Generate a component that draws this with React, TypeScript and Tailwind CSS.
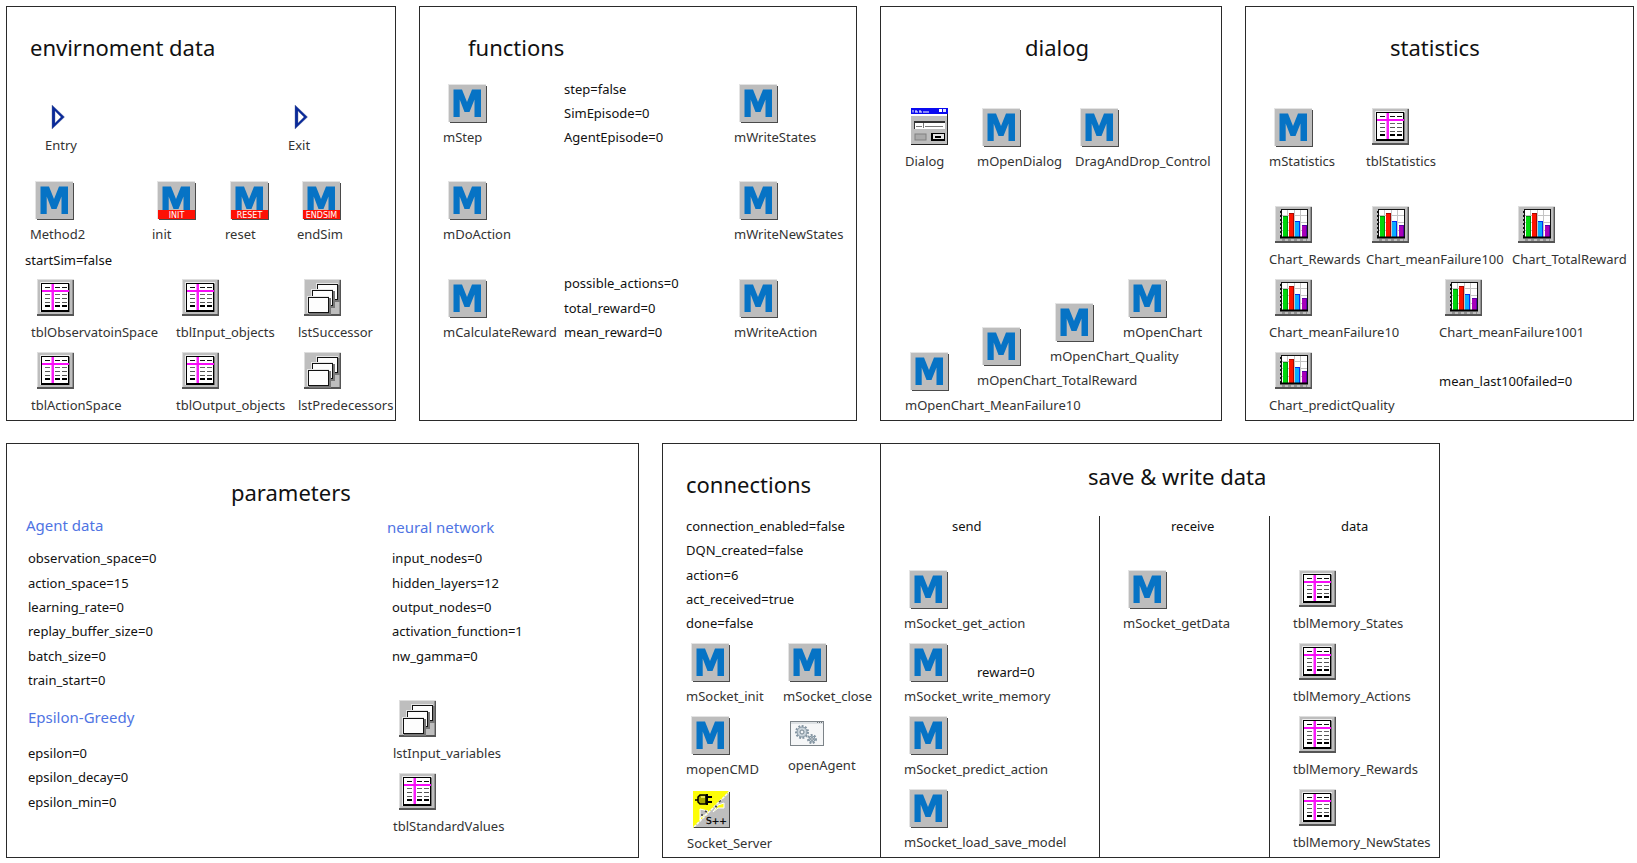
import type { ReactNode } from "react";

type IconKind =
  | "port"
  | "method"
  | "init"
  | "reset"
  | "endsim"
  | "table"
  | "list"
  | "chart"
  | "dialog"
  | "program"
  | "socket";

type NodeItem = { icon: IconKind; label: string; x: number; y: number };
type VarItem = { text: string; x: number; y: number };

function Tile() {
  return (
    <>
      <rect x="0" y="0" width="37" height="37" fill="#bebebe" />
      <path d="M0 37V0H37V1H1V37Z" fill="#dedede" />
      <path d="M0 37V35H35V1H37V37Z" fill="#555" />
      <path d="M35 35V1H36V35Z" fill="#909090" />
    </>
  );
}

function MethodIcon({ tag }: { tag?: string }) {
  return (
    <>
      <rect x="0" y="0" width="38" height="38" fill="#e4e4e4" />
      <rect x="1" y="1" width="37" height="37" fill="#bdbdbd" />
      <path d="M2 39V38H38V2H39V39Z" fill="#4a4a4a" />
      <path d="M5.500 5.500H14L19 18L24 5.500H33V33H26.500V15.500L21.500 28H16.500L11.700 15.500V33H5.500Z" fill="#0673c5" />
      {tag && (
        <>
          <rect x="1" y="29" width="37" height="9" fill="#fd1105" />
          <text
            x="19.5"
            y="36.5"
            textAnchor="middle"
            fontSize="8"
            fontFamily="'DejaVu Sans', sans-serif"
            fill="#fff"
          >
            {tag}
          </text>
        </>
      )}
    </>
  );
}

function TableIcon() {
  const rows = [
    { y: 8, fill: "#111" },
    { y: 15, fill: "#666" },
    { y: 19, fill: "#555" },
    { y: 23, fill: "#555" },
    { y: 26, fill: "#000" },
  ];
  return (
    <g transform="translate(1 0)">
      <Tile />
      <path d="M3.500 33V3.500H33" stroke="#eee" fill="none" />
      <rect x="4" y="4" width="28" height="29" fill="#000" />
      <rect x="32" y="5" width="1" height="28" fill="#777" />
      <rect x="5" y="5" width="26" height="26" fill="#fff" />
      {rows.map((r) => (
        <g key={r.y} fill={r.fill}>
          <rect x="8" y={r.y} width="5" height={r.y === 26 ? 2 : 1} />
          <rect x="18" y={r.y} width="5" height={r.y === 26 ? 2 : 1} />
          <rect x="25" y={r.y} width="5" height={r.y === 26 ? 2 : 1} />
        </g>
      ))}
      <rect x="14.5" y="5" width="2.5" height="26" fill="#f81cf8" />
      <rect x="5" y="11" width="27" height="2" fill="#f80cf8" />
    </g>
  );
}

function ListIcon() {
  const sheet = (x: number, y: number) => (
    <g>
      <rect x={x + 1} y={y + 1} width="22" height="17" fill="#777" />
      <rect x={x - 1} y={y - 1} width="22" height="17" fill="#e6e6e6" />
      <rect x={x} y={y} width="21" height="16" fill="#111" />
      <rect x={x + 1} y={y + 1} width="19" height="14" fill="#fdfdfd" />
    </g>
  );
  return (
    <g transform="translate(1 0)">
      <Tile />
      {sheet(13, 5)}
      {sheet(8, 11)}
      {sheet(4, 18)}
    </g>
  );
}

function ChartIcon() {
  const bars = [
    { x: 8, y: 10, fill: "#00d80c", side: "#009008" },
    { x: 14, y: 7, fill: "#ff1400", side: "#a80800" },
    { x: 20, y: 15, fill: "#08acff", side: "#0030f0" },
    { x: 27, y: 19, fill: "#a800b8", side: "#5800a8" },
  ];
  return (
    <g transform="translate(1 0)">
      <Tile />
      <rect x="5" y="3" width="28" height="29" fill="#111" />
      <rect x="7" y="4" width="25" height="27" fill="#fff" />
      <path d="M7 9.500H32M7 16.500H32M7 24.500H32M12.500 4V31M19.500 4V31M25.500 4V31" stroke="#c4c4c4" />
      <path d="M5 3V32" stroke="#bebebe" strokeWidth="2" strokeDasharray="2 2" />
      {bars.map((b) => (
        <g key={b.x}>
          <rect x={b.x} y={b.y} width="5" height={31 - b.y} fill={b.side} />
          <rect x={b.x} y={b.y + 1} width="4" height={30 - b.y} fill={b.fill} />
        </g>
      ))}
      <path d="M5 31.500H33" stroke="#000" strokeWidth="2" />
      <path d="M7 34H32" stroke="#666" strokeWidth="1" strokeDasharray="3 3" />
    </g>
  );
}

function DialogIcon() {
  return (
    <g transform="translate(1 0)">
      <rect x="0" y="0" width="37" height="37" fill="#bebebe" />
      <path d="M0 37V36H36V6H37V37Z" fill="#222" />
      <rect x="0" y="0" width="37" height="6" fill="#0a0af0" />
      <path d="M2 2V4.500M4 4H7M5 2V4M8 4H11M9 2V4M12 4H18" stroke="#fff" strokeWidth="1" />
      <rect x="28" y="1" width="3" height="3" fill="#fff" />
      <rect x="32" y="1" width="3" height="3" fill="#e0e0ff" />
      <rect x="0" y="6" width="36" height="2" fill="#fff" />
      <rect x="3" y="13" width="31" height="8" fill="#333" />
      <rect x="4" y="15" width="30" height="6" fill="#fff" />
      <path d="M5 18.500H11M14 18.500H32M12.500 15V20" stroke="#777" />
      <rect x="4" y="26" width="11" height="6" fill="#aaa" stroke="#808080" />
      <rect x="20" y="25" width="14" height="8" fill="#000" />
      <rect x="22" y="26" width="11" height="5" fill="#e4e4e4" />
      <path d="M24 29H30" stroke="#000" strokeWidth="2" />
    </g>
  );
}

function Gear({ cx, cy, r }: { cx: number; cy: number; r: number }) {
  return (
    <>
      <circle
        cx={cx}
        cy={cy}
        r={r}
        fill="none"
        stroke="#8495a2"
        strokeWidth="2"
        strokeDasharray="1.900 1.500"
      />
      <circle cx={cx} cy={cy} r={r - 1} fill="#c9d3da" stroke="#8495a2" strokeWidth="1" />
      <circle cx={cx} cy={cy} r={r / 3} fill="#f4f6f8" stroke="#73838f" strokeWidth="1" />
    </>
  );
}

function ProgramIcon() {
  return (
    <>
      <rect x="-2.5" y="9.500" width="33" height="24" fill="#f5f6f7" stroke="#7c8388" />
      <rect x="-2" y="10" width="32" height="2" fill="#dde1e4" />
      <path d="M24 10.500H30" stroke="#6c7378" strokeDasharray="1 1" />
      <Gear cx={9} cy={20} r={6} />
      <Gear cx={19} cy={27} r={4} />
    </>
  );
}

function SocketIcon() {
  return (
    <g transform="translate(1 1)">
      <rect x="0" y="0" width="37" height="37" fill="#bebebe" />
      <path d="M0 0H37L0 37Z" fill="#fdfd08" />
      <path d="M37 0L0 37" stroke="#f8f8f8" strokeWidth="1.500" strokeDasharray="3 1" />
      <path d="M7 18L15 20L12 24L8 26L7 29Z" fill="#bebebe" stroke="#fff" />
      <path d="M31 12V17H25L20 21L25 14Z" fill="#fdfd08" stroke="#fff" />
      <path d="M26 11L28 9.500M22 15L24 16M12 20L14 21M8 24H10" stroke="#444" strokeWidth="1.500" />
      <path d="M1 37V36H36V1H37V37Z" fill="#444" />
      <path d="M2 9H5V6L7 4H13V13H7L5 11V9" fill="#a8a800" stroke="#000" strokeWidth="1.500" />
      <path d="M8 6H12" stroke="#fff870" strokeWidth="1.500" />
      <path d="M13 6H19M13 11H19M14 3V14" stroke="#000" strokeWidth="2" />
      <text x="13" y="33" fontSize="9" fontFamily="'DejaVu Sans', sans-serif" fill="#000" stroke="#000" strokeWidth="0.3">
        S++
      </text>
    </g>
  );
}

function PortIcon() {
  return (
    <path
      d="M2 13L14.500 25L2 37ZM5 19V31L11 25Z"
      fill="#0a2a9a"
      fillRule="evenodd"
      stroke="#5a6a9a"
      strokeWidth="0.4"
    />
  );
}

const icons: Record<IconKind, ReactNode> = {
  port: <PortIcon />,
  method: <MethodIcon />,
  init: <MethodIcon tag="INIT" />,
  reset: <MethodIcon tag="RESET" />,
  endsim: <MethodIcon tag="ENDSIM" />,
  table: <TableIcon />,
  list: <ListIcon />,
  chart: <ChartIcon />,
  dialog: <DialogIcon />,
  program: <ProgramIcon />,
  socket: <SocketIcon />,
};

function ModelNode({ icon, label, x, y }: NodeItem) {
  return (
    <figure className="absolute flex flex-col gap-1" style={{ left: x, top: y }}>
      <svg width="39" height="39" viewBox="0 0 39 39" className="ml-[5px] overflow-visible" aria-hidden="true">
        {icons[icon]}
      </svg>
      <figcaption className="text-[13px] leading-5 whitespace-nowrap text-[#333]">{label}</figcaption>
    </figure>
  );
}

function Variable({ text, x, y }: VarItem) {
  return (
    <p className="absolute text-[13px] leading-5 whitespace-nowrap" style={{ left: x, top: y }}>
      {text}
    </p>
  );
}

function Group({ text, x, y }: VarItem) {
  return (
    <h3 className="absolute text-[15px] leading-6 whitespace-nowrap text-[#4f74e3]" style={{ left: x, top: y }}>
      {text}
    </h3>
  );
}

function Canvas({ nodes = [], vars = [] }: { nodes?: NodeItem[]; vars?: VarItem[] }) {
  return (
    <>
      {nodes.map((n) => (
        <ModelNode key={n.label} {...n} />
      ))}
      {vars.map((v) => (
        <Variable key={v.text} {...v} />
      ))}
    </>
  );
}

const title = "text-[22px] leading-8 whitespace-nowrap";
const panel = "relative min-h-[415px] border border-[#2a2a2a]";

const environmentNodes: NodeItem[] = [
  { icon: "port", label: "Entry", x: 38, y: 85 },
  { icon: "port", label: "Exit", x: 281, y: 85 },
  { icon: "method", label: "Method2", x: 23, y: 174 },
  { icon: "init", label: "init", x: 145, y: 174 },
  { icon: "reset", label: "reset", x: 218, y: 174 },
  { icon: "endsim", label: "endSim", x: 290, y: 174 },
  { icon: "table", label: "tblObservatoinSpace", x: 24, y: 272 },
  { icon: "table", label: "tblInput_objects", x: 169, y: 272 },
  { icon: "list", label: "lstSuccessor", x: 291, y: 272 },
  { icon: "table", label: "tblActionSpace", x: 24, y: 345 },
  { icon: "table", label: "tblOutput_objects", x: 169, y: 345 },
  { icon: "list", label: "lstPredecessors", x: 291, y: 345 },
];

const functionNodes: NodeItem[] = [
  { icon: "method", label: "mStep", x: 23, y: 77 },
  { icon: "method", label: "mWriteStates", x: 314, y: 77 },
  { icon: "method", label: "mDoAction", x: 23, y: 174 },
  { icon: "method", label: "mWriteNewStates", x: 314, y: 174 },
  { icon: "method", label: "mCalculateReward", x: 23, y: 272 },
  { icon: "method", label: "mWriteAction", x: 314, y: 272 },
];

const functionVars: VarItem[] = [
  { text: "step=false", x: 144, y: 72 },
  { text: "SimEpisode=0", x: 144, y: 96 },
  { text: "AgentEpisode=0", x: 144, y: 120 },
  { text: "possible_actions=0", x: 144, y: 266 },
  { text: "total_reward=0", x: 144, y: 291 },
  { text: "mean_reward=0", x: 144, y: 315 },
];

const dialogNodes: NodeItem[] = [
  { icon: "dialog", label: "Dialog", x: 24, y: 101 },
  { icon: "method", label: "mOpenDialog", x: 96, y: 101 },
  { icon: "method", label: "DragAndDrop_Control", x: 194, y: 101 },
  { icon: "method", label: "mOpenChart", x: 242, y: 272 },
  { icon: "method", label: "mOpenChart_Quality", x: 169, y: 296 },
  { icon: "method", label: "mOpenChart_TotalReward", x: 96, y: 320 },
  { icon: "method", label: "mOpenChart_MeanFailure10", x: 24, y: 345 },
];

const statisticsNodes: NodeItem[] = [
  { icon: "method", label: "mStatistics", x: 23, y: 101 },
  { icon: "table", label: "tblStatistics", x: 120, y: 101 },
  { icon: "chart", label: "Chart_Rewards", x: 23, y: 199 },
  { icon: "chart", label: "Chart_meanFailure100", x: 120, y: 199 },
  { icon: "chart", label: "Chart_TotalReward", x: 266, y: 199 },
  { icon: "chart", label: "Chart_meanFailure10", x: 23, y: 272 },
  { icon: "chart", label: "Chart_meanFailure1001", x: 193, y: 272 },
  { icon: "chart", label: "Chart_predictQuality", x: 23, y: 345 },
];

const statisticsVars: VarItem[] = [{ text: "mean_last100failed=0", x: 193, y: 364 }];

const parameterNodes: NodeItem[] = [
  { icon: "list", label: "lstInput_variables", x: 386, y: 256 },
  { icon: "table", label: "tblStandardValues", x: 386, y: 329 },
];

const parameterVars: VarItem[] = [
  { text: "observation_space=0", x: 21, y: 104 },
  { text: "action_space=15", x: 21, y: 129 },
  { text: "learning_rate=0", x: 21, y: 153 },
  { text: "replay_buffer_size=0", x: 21, y: 177 },
  { text: "batch_size=0", x: 21, y: 202 },
  { text: "train_start=0", x: 21, y: 226 },
  { text: "epsilon=0", x: 21, y: 299 },
  { text: "epsilon_decay=0", x: 21, y: 323 },
  { text: "epsilon_min=0", x: 21, y: 348 },
  { text: "input_nodes=0", x: 385, y: 104 },
  { text: "hidden_layers=12", x: 385, y: 129 },
  { text: "output_nodes=0", x: 385, y: 153 },
  { text: "activation_function=1", x: 385, y: 177 },
  { text: "nw_gamma=0", x: 385, y: 202 },
];

const connectionNodes: NodeItem[] = [
  { icon: "method", label: "mSocket_init", x: 23, y: 199 },
  { icon: "method", label: "mSocket_close", x: 120, y: 199 },
  { icon: "method", label: "mopenCMD", x: 23, y: 272 },
  { icon: "program", label: "openAgent", x: 125, y: 268 },
  { icon: "socket", label: "Socket_Server", x: 24, y: 346 },
];

const connectionVars: VarItem[] = [
  { text: "connection_enabled=false", x: 23, y: 72 },
  { text: "DQN_created=false", x: 23, y: 96 },
  { text: "action=6", x: 23, y: 121 },
  { text: "act_received=true", x: 23, y: 145 },
  { text: "done=false", x: 23, y: 169 },
];

const sendNodes: NodeItem[] = [
  { icon: "method", label: "mSocket_get_action", x: 23, y: 54 },
  { icon: "method", label: "mSocket_write_memory", x: 23, y: 127 },
  { icon: "method", label: "mSocket_predict_action", x: 23, y: 200 },
  { icon: "method", label: "mSocket_load_save_model", x: 23, y: 273 },
];

const receiveNodes: NodeItem[] = [{ icon: "method", label: "mSocket_getData", x: 23, y: 54 }];

const dataNodes: NodeItem[] = [
  { icon: "table", label: "tblMemory_States", x: 23, y: 54 },
  { icon: "table", label: "tblMemory_Actions", x: 23, y: 127 },
  { icon: "table", label: "tblMemory_Rewards", x: 23, y: 200 },
  { icon: "table", label: "tblMemory_NewStates", x: 23, y: 273 },
];

const columnCaption = "pl-[71px] text-[13px] leading-5";

export default function App() {
  return (
    <main className="flex min-h-screen flex-col gap-[22px] bg-white pt-[6px] pr-[3px] pb-[5px] pl-[6px] font-['Noto_Sans',sans-serif] text-[#111]">
      <div className="grid grid-cols-[390fr_438fr_342fr_389fr] gap-[23px]">
        <section className={panel}>
          <h2 className={`${title} pt-6 pl-[23px]`}>envirnoment data</h2>
          <Canvas nodes={environmentNodes} vars={[{ text: "startSim=false", x: 18, y: 243 }]} />
        </section>
        <section className={panel}>
          <h2 className={`${title} pt-6 pl-12`}>functions</h2>
          <Canvas nodes={functionNodes} vars={functionVars} />
        </section>
        <section className={panel}>
          <h2 className={`${title} pt-6 pl-36`}>dialog</h2>
          <Canvas nodes={dialogNodes} />
        </section>
        <section className={panel}>
          <h2 className={`${title} pt-6 pl-36`}>statistics</h2>
          <Canvas nodes={statisticsNodes} vars={statisticsVars} />
        </section>
      </div>

      <div className="grid grid-cols-[633fr_778fr_171fr] gap-[23px]">
        <section className={panel}>
          <h2 className={`${title} pt-8 pl-56`}>parameters</h2>
          <Group text="Agent data" x={19} y={69} />
          <Group text="Epsilon-Greedy" x={21} y={261} />
          <Group text="neural network" x={380} y={71} />
          <Canvas nodes={parameterNodes} vars={parameterVars} />
        </section>

        <div className="grid min-h-[415px] grid-cols-[217fr_559fr] border border-[#2a2a2a]">
          <section className="relative">
            <h2 className={`${title} pt-6 pl-[23px]`}>connections</h2>
            <Canvas nodes={connectionNodes} vars={connectionVars} />
          </section>
          <section className="flex flex-col border-l border-[#2a2a2a]">
            <h2 className={`${title} pt-4 pb-6 pl-[207px]`}>save &amp; write data</h2>
            <div className="grid grow grid-cols-[218fr_170fr_170fr]">
              <div className="relative">
                <h3 className={columnCaption}>send</h3>
                <Canvas nodes={sendNodes} vars={[{ text: "reward=0", x: 96, y: 146 }]} />
              </div>
              <div className="relative border-l border-[#2a2a2a]">
                <h3 className={columnCaption}>receive</h3>
                <Canvas nodes={receiveNodes} />
              </div>
              <div className="relative border-l border-[#2a2a2a]">
                <h3 className={columnCaption}>data</h3>
                <Canvas nodes={dataNodes} />
              </div>
            </div>
          </section>
        </div>
      </div>
    </main>
  );
}
